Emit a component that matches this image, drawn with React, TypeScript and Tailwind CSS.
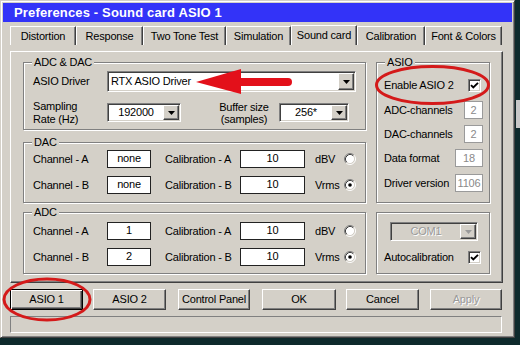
import React from "react";

const raised =
  "border border-t-white border-l-white border-r-[#404040] border-b-[#404040] shadow-[inset_-1px_-1px_0_#808080]";
const sunken =
  "border border-t-[#808080] border-l-[#808080] border-r-white border-b-white shadow-[inset_1px_1px_0_#404040,inset_-1px_-1px_0_#d4d0c8]";

function ArrowBtn({ disabled }: { disabled?: boolean }) {
  return (
    <div className={`w-[16px] h-full bg-[#d4d0c8] ${raised} flex items-center justify-center shrink-0`}>
      <svg width="7" height="4" viewBox="0 0 7 4">
        <path d="M0 0h7L3.5 4z" fill={disabled ? "#9a9a9a" : "#000"} />
      </svg>
    </div>
  );
}

function Combo({
  w,
  h,
  text,
  left,
  disabled,
  className = "",
}: {
  w: number;
  h: number;
  text: string;
  left?: boolean;
  disabled?: boolean;
  className?: string;
}) {
  return (
    <div
      className={`${sunken} ${disabled ? "bg-[#d4d0c8]" : "bg-white"} flex p-[1px] shrink-0 ${className}`}
      style={{ width: w, height: h }}
    >
      <div
        className={`flex-1 flex items-center ${left ? "justify-start pl-[2px]" : "justify-center"} ${
          disabled ? "text-[#9a9a9a] [text-shadow:1px_1px_0_#fff]" : ""
        }`}
      >
        {text}
      </div>
      <ArrowBtn disabled={disabled} />
    </div>
  );
}

function Box({ w, children, dim }: { w: number; children: React.ReactNode; dim?: boolean }) {
  return (
    <div
      className={`h-[18px] bg-white flex items-center justify-center shrink-0 ${
        dim ? "border border-[#9a9a9a] text-[#8a8a8a]" : "border border-[#222] pb-[2px]"
      }`}
      style={{ width: w }}
    >
      {children}
    </div>
  );
}

function Radio({ on }: { on?: boolean }) {
  return (
    <svg width="12" height="12" viewBox="0 0 12 12" className="shrink-0">
      <circle cx="6" cy="6" r="4.5" fill="#fff" />
      <path d="M2.11 9.89A5.5 5.5 0 0 1 9.89 2.11" stroke="#808080" fill="none" />
      <path d="M9.89 2.11A5.5 5.5 0 0 1 2.11 9.89" stroke="#fff" fill="none" />
      <path d="M2.82 9.18A4.5 4.5 0 0 1 9.18 2.82" stroke="#404040" fill="none" />
      <path d="M9.18 2.82A4.5 4.5 0 0 1 2.82 9.18" stroke="#d4d0c8" fill="none" />
      {on && <circle cx="6" cy="6" r="1.8" fill="#000" />}
    </svg>
  );
}

function Check() {
  return (
    <div className={`w-[13px] h-[13px] bg-white ${sunken} flex items-center justify-center shrink-0`}>
      <svg width="9" height="9" viewBox="0 0 9 9">
        <path d="M1 4.2L3.3 6.5L8 1.8" stroke="#000" strokeWidth="1.9" fill="none" />
      </svg>
    </div>
  );
}

function Group({
  label,
  className = "",
  children,
}: {
  label?: string;
  className?: string;
  children?: React.ReactNode;
}) {
  return (
    <div className={`relative border border-[#808080] shadow-[inset_1px_1px_0_#fff,1px_1px_0_#fff] ${className}`}>
      {label && (
        <span className="absolute -top-[6px] left-[8px] px-[2px] bg-[#d4d0c8] leading-[11px]">{label}</span>
      )}
      {children}
    </div>
  );
}

function ChRow({
  ch,
  val,
  cal,
  unit,
  on,
  className = "",
}: {
  ch: string;
  val: string;
  cal: string;
  unit: string;
  on?: boolean;
  className?: string;
}) {
  return (
    <div className={`flex items-center h-[18px] pl-[9px] ${className}`}>
      <span className="w-[74px]">{ch}</span>
      <Box w={44}>{val}</Box>
      <span className="ml-[14px] w-[75px]">{cal}</span>
      <Box w={65}>10</Box>
      <span className="ml-[10px] w-[29px]">{unit}</span>
      <Radio on={on} />
    </div>
  );
}

function Btn({
  w,
  children,
  className = "",
  def,
  disabled,
}: {
  w: number;
  children: React.ReactNode;
  className?: string;
  def?: boolean;
  disabled?: boolean;
}) {
  return (
    <div
      className={`h-[21px] flex items-center justify-center shrink-0 bg-[#d4d0c8] ${
        def
          ? "border border-black shadow-[inset_1px_1px_0_#fff,inset_-1px_-1px_0_#404040,inset_-2px_-2px_0_#808080]"
          : raised
      } ${disabled ? "text-[#9a9a9a] [text-shadow:1px_1px_0_#fff]" : ""} ${className}`}
      style={{ width: w }}
    >
      {children}
    </div>
  );
}

const tabs: [string, number][] = [
  ["Distortion", 66],
  ["Response", 67],
  ["Two Tone Test", 83],
  ["Simulation", 65],
  ["Sound card", 66],
  ["Calibration", 68],
  ["Font & Colors", 77],
];

export default function App() {
  return (
    <div className="relative w-[520px] h-[345px] bg-[#0e2a2c] overflow-hidden font-['Liberation_Sans',Arial,sans-serif] text-[11px] tracking-[-0.2px] text-black leading-none">
      <div className="w-[515px] h-[338px] bg-[#d4d0c8] border border-t-[#d4d0c8] border-l-[#d4d0c8] border-r-[#404040] border-b-[#404040] shadow-[inset_1px_1px_0_#fff,inset_-1px_-1px_0_#808080] p-[2px] flex flex-col">
        {/* title */}
        <div className="h-[19px] bg-[#3333f8] flex items-center pl-[11px] text-white font-bold text-[13px] tracking-[0.15px] shrink-0">
          Preferences - Sound card ASIO 1
        </div>

        {/* tabs */}
        <div className="flex items-end mt-[3px] ml-[7px] h-[20px] shrink-0">
          {tabs.map(([t, w]) => (
            <div
              key={t}
              className={`${
                t === "Sound card" ? "h-[20px]" : "h-[19px]"
              } border-t border-l border-r border-t-white border-l-white border-r-[#404040] shadow-[inset_-1px_0_0_#808080] flex items-center justify-center shrink-0`}
              style={{ width: w }}
            >
              {t}
            </div>
          ))}
        </div>

        {/* panel */}
        <div className={`mt-[6px] ml-[7px] w-[493px] h-[232px] pt-[10px] pl-[12px] ${raised} shrink-0`}>
          <div className="flex">
            <div className="w-[343px] flex flex-col">
              <Group label="ADC & DAC" className="h-[68px]">
                <div className="pt-[8px] pl-[9px] flex flex-col">
                  <div className="flex items-center h-[21px]">
                    <span className="w-[74px]">ASIO Driver</span>
                    <Combo w={249} h={21} text="RTX ASIO Driver" left />
                  </div>
                  <div className="flex items-center h-[19px] mt-[11px]">
                    <span className="w-[74px] leading-[13px]">
                      Sampling
                      <br />
                      Rate (Hz)
                    </span>
                    <Combo w={74} h={19} text="192000" />
                    <span className="ml-[33px] w-[60px] text-center leading-[12px]">
                      Buffer size
                      <br />
                      (samples)
                    </span>
                    <Combo w={70} h={19} text="256*" className="ml-[5px]" />
                  </div>
                </div>
              </Group>
              <Group label="DAC" className="h-[61px] mt-[12px]">
                <div className="pt-[7px] flex flex-col">
                  <ChRow ch="Channel - A" val="none" cal="Calibration - A" unit="dBV" />
                  <ChRow ch="Channel - B" val="none" cal="Calibration - B" unit="Vrms" on className="mt-[8px]" />
                </div>
              </Group>
            </div>
            <Group label="ASIO" className="ml-[10px] w-[114px] h-[141px]">
              <div className="pt-[13px] pl-[7px] pr-[6px] flex flex-col">
                <div className="flex items-center justify-between h-[18px] pr-[2px]">
                  <span>Enable ASIO 2</span>
                  <Check />
                </div>
                <div className="flex items-center justify-between h-[18px] mt-[7px]">
                  <span>ADC-channels</span>
                  <Box w={19} dim>2</Box>
                </div>
                <div className="flex items-center justify-between h-[18px] mt-[6px]">
                  <span>DAC-channels</span>
                  <Box w={19} dim>2</Box>
                </div>
                <div className="flex items-center justify-between h-[18px] mt-[6px]">
                  <span>Data format</span>
                  <Box w={28} dim>18</Box>
                </div>
                <div className="flex items-center justify-between h-[18px] mt-[7px]">
                  <span>Driver version</span>
                  <Box w={28} dim>1106</Box>
                </div>
              </div>
            </Group>
          </div>
          <div className="flex mt-[9px]">
            <Group label="ADC" className="w-[343px] h-[62px]">
              <div className="pt-[9px] flex flex-col">
                <ChRow ch="Channel - A" val="1" cal="Calibration - A" unit="dBV" />
                <ChRow ch="Channel - B" val="2" cal="Calibration - B" unit="Vrms" on className="mt-[8px]" />
              </div>
            </Group>
            <Group className="ml-[10px] w-[114px] h-[62px]">
              <div className="pt-[9px] pl-[7px] pr-[6px] flex flex-col">
                <Combo w={88} h={19} text="COM1" disabled className="ml-[6px]" />
                <div className="flex items-center justify-between h-[18px] mt-[7px] pr-[2px]">
                  <span>Autocalibration</span>
                  <Check />
                </div>
              </div>
            </Group>
          </div>
        </div>

        {/* buttons */}
        <div className="flex mt-[6px] ml-[7px] shrink-0">
          <Btn w={73} def>
            ASIO 1
          </Btn>
          <Btn w={73} className="ml-[10px]">
            ASIO 2
          </Btn>
          <Btn w={72} className="ml-[12px]">
            Control Panel
          </Btn>
          <Btn w={74} className="ml-[12px]">
            OK
          </Btn>
          <Btn w={73} className="ml-[10px]">
            Cancel
          </Btn>
          <Btn w={72} className="ml-[11px]" disabled>
            Apply
          </Btn>
        </div>

        {/* status bar */}
        <div className="mt-[6px] ml-[7px] w-[492px] h-[17px] border border-t-[#808080] border-l-[#808080] border-r-white border-b-white shrink-0" />
      </div>

      {/* desktop fragment */}
      <div className="absolute left-[516px] top-[100px] w-[4px] h-[28px] bg-[#c8c8c8]" />

      {/* red annotations */}
      <svg className="absolute left-0 top-0 pointer-events-none" width="520" height="345" viewBox="0 0 520 345">
        <line x1="236" y1="82" x2="288" y2="82" stroke="#e3101a" strokeWidth="8" strokeLinecap="round" />
        <polygon points="196,82 241,69 241,94" fill="#e3101a" />
        <ellipse cx="432.5" cy="85" rx="56" ry="18.5" fill="none" stroke="#d41a1a" strokeWidth="3" />
        <ellipse cx="47" cy="299.5" rx="43" ry="20.5" fill="none" stroke="#d41a1a" strokeWidth="3" />
      </svg>
    </div>
  );
}
